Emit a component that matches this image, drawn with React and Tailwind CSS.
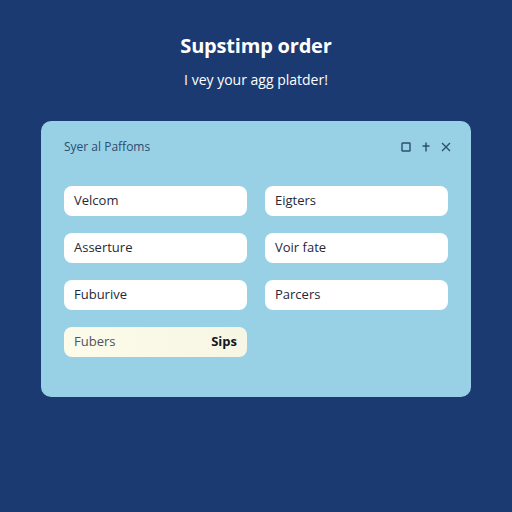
const items = [
  "Velcom",
  "Eigters",
  "Asserture",
  "Voir fate",
  "Fuburive",
  "Parcers",
];

export default function App() {
  return (
    <div
      className="w-[512px] h-[512px] bg-[#1b3a72] flex flex-col items-center"
      style={{ fontFamily: "'Open Sans', 'Noto Sans', sans-serif" }}
    >
      <h1 className="mt-[32px] text-[20px] leading-[28px] font-bold text-white tracking-[-0.2px]">
        Supstimp order
      </h1>
      <p className="mt-[10px] text-[14px] leading-[20px] text-white">
        I vey your agg platder!
      </p>

      <div className="mt-[31px] w-[430px] h-[276px] rounded-[10px] bg-[#98d1e5] px-[23px] pt-[18px]">
        {/* panel header */}
        <div className="flex items-center justify-between h-[16px]">
          <span className="text-[12px] text-[#2b4d72]">Syer al Paffoms</span>
          <div className="flex items-center gap-[10px] mr-[-3px] text-[#2b4d72]">
            <svg width="10" height="10" viewBox="0 0 10 10" fill="none" stroke="currentColor" strokeWidth="1.4">
              <rect x="1" y="1" width="8" height="8" rx="0.5" />
            </svg>
            <svg width="10" height="10" viewBox="0 0 10 10" fill="none" stroke="currentColor" strokeWidth="1.4">
              <path d="M5 0.5v9M1.5 4h7" />
            </svg>
            <svg width="10" height="10" viewBox="0 0 10 10" fill="none" stroke="currentColor" strokeWidth="1.3">
              <path d="M1 1l8 8M9 1l-8 8" />
            </svg>
          </div>
        </div>

        {/* field grid */}
        <div className="mt-[31px] grid grid-cols-2 gap-x-[18px] gap-y-[17px]">
          {items.map((label) => (
            <div
              key={label}
              className="h-[30px] rounded-[8px] bg-white flex items-center px-[10px] text-[13px] text-[#1f2937]"
            >
              {label}
            </div>
          ))}
          <div className="h-[30px] rounded-[8px] bg-gradient-to-r from-[#fdfbe9] to-[#f7f6e4] flex items-center justify-between px-[10px] text-[13px]">
            <span className="text-[#4b5563]">Fubers</span>
            <span className="font-bold text-[#111827]">Sips</span>
          </div>
        </div>
      </div>
    </div>
  );
}
